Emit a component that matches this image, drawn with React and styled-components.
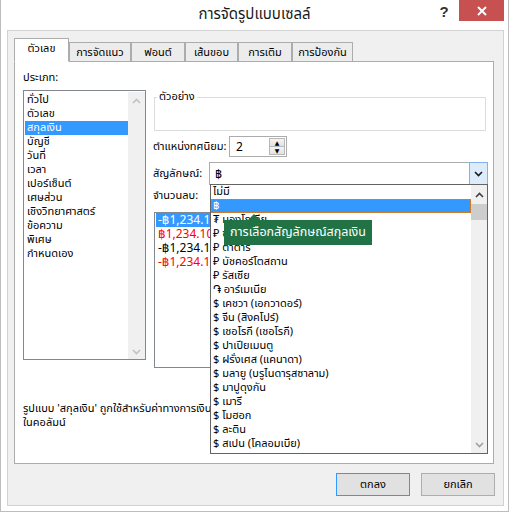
import React from "react";
import styled, { createGlobalStyle } from "styled-components";

const GlobalStyle = createGlobalStyle`
  html, body {
    margin: 0;
    background: #ffffff;
  }
  body {
    font-family: Tahoma, "Leelawadee UI", "Noto Sans Thai", "Noto Sans", "DejaVu Sans", sans-serif;
    font-size: 11px;
    color: #000;
  }
`;

const categories = [
  "ทั่วไป",
  "ตัวเลข",
  "สกุลเงิน",
  "บัญชี",
  "วันที่",
  "เวลา",
  "เปอร์เซ็นต์",
  "เศษส่วน",
  "เชิงวิทยาศาสตร์",
  "ข้อความ",
  "พิเศษ",
  "กำหนดเอง",
];

const tabs = [
  { label: "ตัวเลข", w: 55 },
  { label: "การจัดแนว", w: 62 },
  { label: "ฟอนต์", w: 54 },
  { label: "เส้นขอบ", w: 53 },
  { label: "การเติม", w: 54 },
  { label: "การป้องกัน", w: 61 },
];

const negatives = [
  { text: "-฿1,234.10", red: false },
  { text: "฿1,234.10", red: true },
  { text: "-฿1,234.10", red: false },
  { text: "-฿1,234.10", red: true },
];

const symbols = [
  "ไม่มี",
  "฿",
  "₮ มองโกเลีย",
  "₽ ซาฮา",
  "₽ ตาตาร",
  "₽ บัชคอร์โตสถาน",
  "₽ รัสเซีย",
  "֏ อาร์เมเนีย",
  "$ เคชวา (เอกวาดอร์)",
  "$ จีน (สิงคโปร์)",
  "$ เชอโรกี (เชอโรกี)",
  "$ ปาเปียเมนตู",
  "$ ฝรั่งเศส (แคนาดา)",
  "$ มลายู (บรูไนดารุสซาลาม)",
  "$ มาปูดุงกัน",
  "$ เมารี",
  "$ โมฮอก",
  "$ ละติน",
  "$ สเปน (โคลอมเบีย)",
];

const Chevron = ({ up, color = "#606060" }) => (
  <svg width="9" height="6" viewBox="0 0 9 6">
    <path
      d={up ? "M1 5 L4.5 1.5 L8 5" : "M1 1 L4.5 4.5 L8 1"}
      fill="none"
      stroke={color}
      strokeWidth="1.6"
    />
  </svg>
);

const Window = styled.div`
  width: 509px;
  height: 512px;
  box-sizing: border-box;
  border: 1px solid #bdbdbd;
  border-top: none;
  background: #fff;
  display: flex;
  flex-direction: column;
`;

const TitleBar = styled.div`
  height: 30px;
  display: grid;
  grid-template-columns: 1fr auto 1fr;
  align-items: start;
`;

const Title = styled.div`
  grid-column: 2;
  font-size: 15px;
  color: #1a1a1a;
  line-height: 30px;
`;

const Controls = styled.div`
  grid-column: 3;
  justify-self: end;
  display: flex;
  align-items: flex-start;
  margin-right: 4px;
`;

const Help = styled.div`
  font-family: "Liberation Sans", Arial, sans-serif;
  font-weight: bold;
  font-size: 15px;
  color: #333;
  width: 30px;
  text-align: center;
  line-height: 24px;
`;

const Close = styled.div`
  width: 45px;
  height: 21px;
  background: #c75050;
  display: flex;
  align-items: center;
  justify-content: center;
`;

const Panel = styled.div`
  flex: 1;
  margin: 0 4px 5px 6px;
  border: 1px solid #d2d2d2;
  background: #f0f0f0;
  padding: 7px 9px 0 6px;
  display: flex;
  flex-direction: column;
`;

const TabRow = styled.div`
  display: flex;
  align-items: flex-end;
  height: 24px;
  margin-bottom: -1px;
  position: relative;
  z-index: 1;
`;

const Tab = styled.div`
  width: ${(p) => p.$w}px;
  height: ${(p) => (p.$active ? 24 : 20)}px;
  box-sizing: border-box;
  border: 1px solid #acacac;
  border-bottom: ${(p) => (p.$active ? "1px solid #fff" : "1px solid #acacac")};
  background: ${(p) => (p.$active ? "#fff" : "#ececec")};
  display: flex;
  align-items: center;
  justify-content: center;
  padding-bottom: ${(p) => (p.$active ? 4 : 0)}px;
`;

const TabBody = styled.div`
  height: 403px;
  box-sizing: border-box;
  border: 1px solid #acacac;
  background: #fff;
  padding: 0 4px 0 8px;
`;

const Columns = styled.div`
  display: flex;
`;

const LeftCol = styled.div`
  width: 123px;
  flex-shrink: 0;
  display: flex;
  flex-direction: column;
`;

const Label = styled.div`
  line-height: 14px;
  margin-top: ${(p) => p.$top || 0}px;
  white-space: nowrap;
`;

const ListBox = styled.div`
  margin-top: 5px;
  height: 270px;
  box-sizing: border-box;
  border: 1px solid #828790;
  display: flex;
  padding: 1px 0 0 1px;
`;

const Items = styled.div`
  flex: 1;
  padding-top: 1px;
`;

const Item = styled.div`
  height: 14px;
  line-height: 14px;
  padding-left: 2px;
  white-space: nowrap;
  background: ${(p) => (p.$selected ? "#3399ff" : "transparent")};
  color: ${(p) => (p.$selected ? "#fff" : "#000")};
`;

const ScrollTrack = styled.div`
  width: 17px;
  background: #f0f0f0;
  display: flex;
  flex-direction: column;
  align-items: center;
  justify-content: space-between;
  padding: 6px 0 4px;
  box-sizing: border-box;
`;

const RightCol = styled.div`
  flex: 1;
  margin-left: 7px;
  display: flex;
  flex-direction: column;
  position: relative;
`;

const SampleBox = styled.div`
  margin: 35px 3px 0 1px;
  height: 34px;
  box-sizing: border-box;
  border: 1px solid #dcdcdc;
`;

const SampleLegend = styled.div`
  display: inline-block;
  background: #fff;
  margin: -8px 0 0 2px;
  padding: 0 2px;
  line-height: 14px;
  vertical-align: top;
`;

const FieldRow = styled.div`
  display: flex;
  align-items: center;
  margin-top: 5px;
`;

const FieldLabel = styled.div`
  width: ${(p) => p.$w}px;
  flex-shrink: 0;
  white-space: nowrap;
  overflow: visible;
`;

const SpinBox = styled.div`
  width: 58px;
  height: 21px;
  box-sizing: border-box;
  border: 1px solid #acacac;
  display: flex;
  align-items: center;
  justify-content: space-between;
  padding: 1px 1px 1px 6px;
  font-family: "Noto Sans", "DejaVu Sans", sans-serif;
  font-size: 12px;
`;

const SpinButtons = styled.div`
  width: 16px;
  height: 17px;
  display: flex;
  flex-direction: column;
  border: 1px solid #b8b8b8;
  box-sizing: border-box;
`;

const SpinHalf = styled.div`
  flex: 1;
  background: linear-gradient(#f4f4f4, #e2e2e2);
  display: flex;
  align-items: center;
  justify-content: center;
  font-size: 6px;
  line-height: 1;
  & + & {
    border-top: 1px solid #b8b8b8;
  }
`;

const Combo = styled.div`
  position: relative;
  width: 279px;
  height: 23px;
  box-sizing: border-box;
  border: 1px solid #acacac;
  display: flex;
  align-items: stretch;
`;

const ComboValue = styled.div`
  flex: 1;
  padding-left: 5px;
  display: flex;
  align-items: center;
  font-size: 12px;
`;

const ComboButton = styled.div`
  width: 17px;
  background: #dcecfc;
  border: 1px solid #7eb4ea;
  margin: -1px -1px -1px 0;
  display: flex;
  align-items: center;
  justify-content: center;
`;

const DropList = styled.div`
  position: absolute;
  top: 100%;
  left: 0;
  width: 278px;
  height: 270px;
  box-sizing: border-box;
  border: 1px solid #646464;
  background: #fff;
  display: flex;
  z-index: 5;
`;

const DropItems = styled.div`
  flex: 1;
`;

const DropItem = styled.div`
  height: 14px;
  white-space: nowrap;
  box-sizing: border-box;
  background: ${(p) => (p.$selected ? "#3399ff" : "transparent")};
  color: ${(p) => (p.$selected ? "#fff" : "#000")};
  border: ${(p) => (p.$selected ? "1px dotted #d08030" : "none")};
  line-height: ${(p) => (p.$selected ? 12 : 14)}px;
  padding-left: ${(p) => (p.$selected ? 1 : 2)}px;
`;

const DropScroll = styled.div`
  width: 16px;
  background: #f0f0f0;
  display: flex;
  flex-direction: column;
  align-items: center;
  padding: 7px 0 5px;
  box-sizing: border-box;
`;

const Thumb = styled.div`
  width: 16px;
  height: 16px;
  background: #cdcdcd;
  margin-top: 6px;
`;

const ScrollGap = styled.div`
  flex: 1;
`;

const Tooltip = styled.div`
  position: absolute;
  top: 35px;
  left: 13px;
  background: #217346;
  color: #fff;
  font-size: 12.5px;
  padding: 0 6px;
  height: 25px;
  line-height: 25px;
  white-space: nowrap;
  &::before {
    content: "";
    position: absolute;
    top: -6px;
    left: 24px;
    border-left: 6px solid transparent;
    border-right: 6px solid transparent;
    border-bottom: 6px solid #217346;
  }
`;

const NegList = styled.div`
  margin: 9px 2px 0 1px;
  height: 156px;
  box-sizing: border-box;
  border: 1px solid #828790;
  padding: 0 0 0 1px;
  font-family: "Noto Sans", "DejaVu Sans", sans-serif;
  font-size: 12px;
`;

const NegItem = styled.div`
  height: 14px;
  line-height: 14px;
  padding-left: 2px;
  background: ${(p) => (p.$selected ? "#3399ff" : "transparent")};
  color: ${(p) => (p.$selected ? "#fff" : p.$red ? "#ff0000" : "#000")};
`;

const Description = styled.div`
  margin-top: 34px;
  line-height: 14px;
  white-space: nowrap;
`;

const ButtonRow = styled.div`
  display: flex;
  justify-content: flex-end;
  gap: 11px;
  margin: 9px -1px 0 0;
`;

const Button = styled.div`
  width: 74px;
  height: 23px;
  box-sizing: border-box;
  border: 1px solid ${(p) => (p.$primary ? "#3399ff" : "#adadad")};
  background: #e1e1e1;
  display: flex;
  align-items: center;
  justify-content: center;
`;

export default function App() {
  return (
    <>
      <GlobalStyle />
      <Window>
        <TitleBar>
          <Title>การจัดรูปแบบเซลล์</Title>
          <Controls>
            <Help>?</Help>
            <Close>
              <svg width="10" height="10" viewBox="0 0 10 10">
                <path d="M1 1 L9 9 M9 1 L1 9" stroke="#fff" strokeWidth="2" />
              </svg>
            </Close>
          </Controls>
        </TitleBar>

        <Panel>
          <TabRow>
            {tabs.map((t, i) => (
              <Tab key={t.label} $w={t.w} $active={i === 0}>
                {t.label}
              </Tab>
            ))}
          </TabRow>

          <TabBody>
            <Columns>
              <LeftCol>
                <Label $top={9}>ประเภท:</Label>
                <ListBox>
                  <Items>
                    {categories.map((c, i) => (
                      <Item key={c} $selected={i === 2}>
                        {c}
                      </Item>
                    ))}
                  </Items>
                  <ScrollTrack>
                    <Chevron up color="#c2c2c2" />
                    <Chevron color="#c2c2c2" />
                  </ScrollTrack>
                </ListBox>
              </LeftCol>

              <RightCol>
                <SampleBox>
                  <SampleLegend>ตัวอย่าง</SampleLegend>
                </SampleBox>

                <FieldRow>
                  <FieldLabel $w={76}>ตำแหน่งทศนิยม:</FieldLabel>
                  <SpinBox>
                    2
                    <SpinButtons>
                      <SpinHalf>▲</SpinHalf>
                      <SpinHalf>▼</SpinHalf>
                    </SpinButtons>
                  </SpinBox>
                </FieldRow>

                <FieldRow>
                  <FieldLabel $w={56}>สัญลักษณ์:</FieldLabel>
                  <Combo>
                    <ComboValue>฿</ComboValue>
                    <ComboButton>
                      <Chevron color="#1a1a1a" />
                    </ComboButton>
                    <DropList>
                      <DropItems>
                        {symbols.map((s, i) => (
                          <DropItem key={s} $selected={i === 1}>
                            {s}
                          </DropItem>
                        ))}
                      </DropItems>
                      <DropScroll>
                        <Chevron up color="#404040" />
                        <Thumb />
                        <ScrollGap />
                        <Chevron color="#a0a0a0" />
                      </DropScroll>
                      <Tooltip>การเลือกสัญลักษณ์สกุลเงิน</Tooltip>
                    </DropList>
                  </Combo>
                </FieldRow>

                <Label $top={4}>จำนวนลบ:</Label>
                <NegList>
                  {negatives.map((n, i) => (
                    <NegItem key={i} $red={n.red} $selected={i === 0}>
                      {n.text}
                    </NegItem>
                  ))}
                </NegList>
              </RightCol>
            </Columns>

            <Description>
              รูปแบบ 'สกุลเงิน' ถูกใช้สำหรับค่าทางการเงินทั่วไป ใช้รูปแบบ 'การบัญชี' เพื่อจัดแนวจุดทศนิยม
              <br />
              ในคอลัมน์
            </Description>
          </TabBody>

          <ButtonRow>
            <Button $primary>ตกลง</Button>
            <Button>ยกเลิก</Button>
          </ButtonRow>
        </Panel>
      </Window>
    </>
  );
}
